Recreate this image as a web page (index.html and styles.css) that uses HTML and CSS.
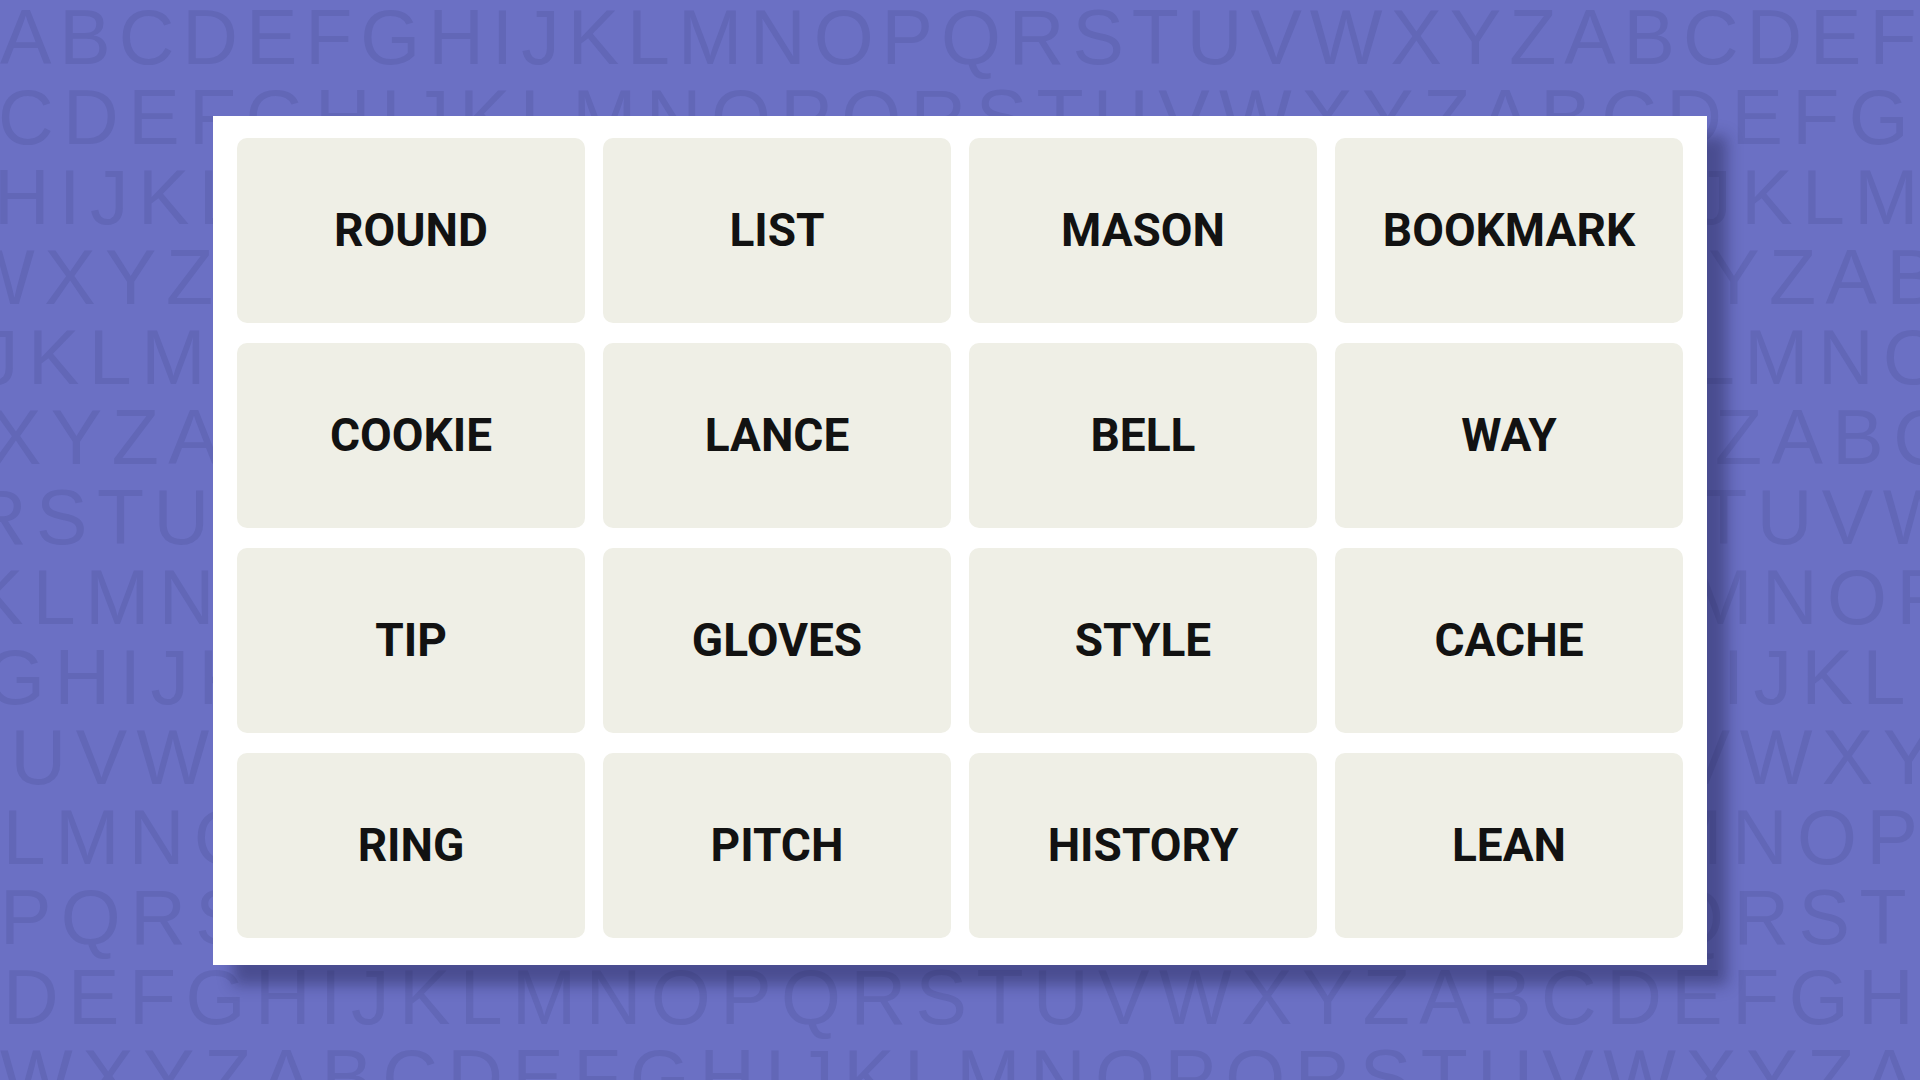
FILE: index.html
```html
<!DOCTYPE html>
<html lang="en">
<head>
<meta charset="utf-8">
<title>Connections</title>
<link rel="stylesheet" href="styles.css">
</head>
<body>
<div class="letters" aria-hidden="true">
  <div class="row r1">ABCDEFGHIJKLMNOPQRSTUVWXYZABCDEFGHIJKLMN</div>
  <div class="row r2">CDEFGHIJKLMNOPQRSTUVWXYZABCDEFGHIJKLMNOP</div>
  <div class="row r3">HIJKLMNOPQRSTUVWXYZABCDEFGHIJKLMNOPQRSTU</div>
  <div class="row r4">WXYZABCDEFGHIJKLMNOPQRSTUVWXYZABCDEFGHIJ</div>
  <div class="row r5">JKLMNOPQRSTUVWXYZABCDEFGHIJKLMNOPQRSTUVW</div>
  <div class="row r6">XYZABCDEFGHIJKLMNOPQRSTUVWXYZABCDEFGHIJK</div>
  <div class="row r7">RSTUVWXYZABCDEFGHIJKLMNOPQRSTUVWXYZABCDE</div>
  <div class="row r8">KLMNOPQRSTUVWXYZABCDEFGHIJKLMNOPQRSTUVWX</div>
  <div class="row r9">GHIJKLMNOPQRSTUVWXYZABCDEFGHIJKLMNOPQRST</div>
  <div class="row r10">TUVWXYZABCDEFGHIJKLMNOPQRSTUVWXYZABCDEFG</div>
  <div class="row r11">KLMNOPQRSTUVWXYZABCDEFGHIJKLMNOPQRSTUVWX</div>
  <div class="row r12">PQRSTUVWXYZABCDEFGHIJKLMNOPQRSTUVWXYZABC</div>
  <div class="row r13">DEFGHIJKLMNOPQRSTUVWXYZABCDEFGHIJKLMNOPQ</div>
  <div class="row r14">WXYZABCDEFGHIJKLMNOPQRSTUVWXYZABCDEFGHIJ</div>
</div>
<main class="stage">
  <section class="board">
    <div class="tile">ROUND</div>
    <div class="tile">LIST</div>
    <div class="tile">MASON</div>
    <div class="tile">BOOKMARK</div>
    <div class="tile">COOKIE</div>
    <div class="tile">LANCE</div>
    <div class="tile">BELL</div>
    <div class="tile">WAY</div>
    <div class="tile">TIP</div>
    <div class="tile">GLOVES</div>
    <div class="tile">STYLE</div>
    <div class="tile">CACHE</div>
    <div class="tile">RING</div>
    <div class="tile">PITCH</div>
    <div class="tile">HISTORY</div>
    <div class="tile">LEAN</div>
  </section>
</main>
</body>
</html>
```

FILE: styles.css
```css
html, body {
  margin: 0;
  padding: 0;
  width: 1920px;
  height: 1080px;
  overflow: hidden;
}

body {
  background: #6b70c4;
  position: relative;
}

.letters {
  position: absolute;
  left: 0;
  top: -3px;
  width: 1920px;
  height: 1090px;
  overflow: hidden;
  font-family: "Liberation Sans", Arial, sans-serif;
  font-size: 77px;
  line-height: 80px;
  letter-spacing: 9.5px;
  color: #6267b7;
  z-index: 0;
}

.row {
  white-space: nowrap;
}

.r1 { margin-left: 0; letter-spacing: 8px; }
.r2 { margin-left: -2px; }
.r3 { margin-left: -6px; }
.r4 { margin-left: -38px; }
.r5 { margin-left: -20px; }
.r6 { margin-left: -10px; }
.r7 { margin-left: -29px; }
.r8 { margin-left: -28px; }
.r9 { margin-left: -15px; }
.r10 { margin-left: -46px; }
.r11 { margin-left: -58px; }
.r12 { margin-left: 0; }
.r13 { margin-left: 3px; }
.r14 { margin-left: 0; }

.stage {
  position: relative;
  z-index: 1;
  width: 1920px;
  height: 1080px;
  display: flex;
  align-items: center;
  justify-content: center;
}

.board {
  width: 1494px;
  height: 849px;
  box-sizing: border-box;
  background: #ffffff;
  padding: 22px 24px 27px;
  display: grid;
  grid-template-columns: repeat(4, 1fr);
  grid-template-rows: repeat(4, 1fr);
  column-gap: 18px;
  row-gap: 20px;
  box-shadow: 20px 20px 14px rgba(20, 22, 60, 0.38);
}

.tile {
  background: #efefe6;
  border-radius: 10px;
  display: flex;
  align-items: center;
  justify-content: center;
  font-family: Roboto, "Liberation Sans", sans-serif;
  font-weight: 700;
  font-size: 46px;
  color: #121212;
  letter-spacing: 0;
}
```
